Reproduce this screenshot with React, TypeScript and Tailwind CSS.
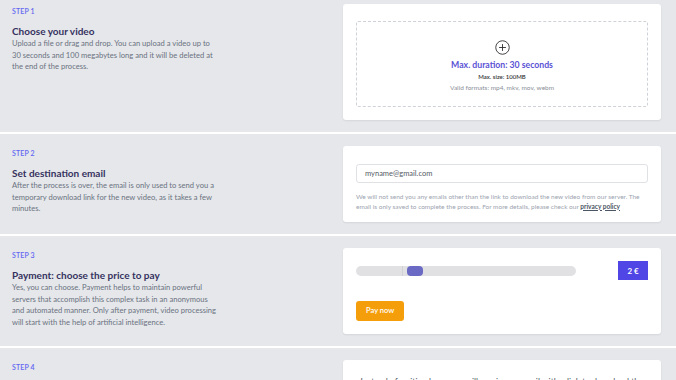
import React from "react";

function StepText({ step, title, desc }: { step: string; title: string; desc: string }) {
  return (
    <div className="flex-1 pt-[2px]">
      <div className="text-[7px] leading-[10px] font-semibold uppercase tracking-[0.02em] text-[#6366f1]">{step}</div>
      <div className="mt-[9px] text-[10px] leading-[13px] font-bold text-[#36325f]">{title}</div>
      <p className="w-[205px] text-[7.6px] leading-[11.5px] text-[#6b7280]">{desc}</p>
    </div>
  );
}

function Card({ children, className }: { children: React.ReactNode; className?: string }) {
  return (
    <div className={"w-[318px] mr-[15px] bg-white rounded-[3px] shadow-[0_1px_2px_rgba(0,0,0,0.08)] " + (className ?? "")}>
      {children}
    </div>
  );
}

export default function App() {
  return (
    <div className="h-[380px] w-[676px] overflow-hidden bg-[#e5e7eb] font-['Lato',_sans-serif]">
      <div className="-mt-[8px]">
        {/* Step 1 */}
        <section className="flex items-start pl-[12px] py-[12px]">
          <StepText
            step="Step 1"
            title="Choose your video"
            desc="Upload a file or drag and drop. You can upload a video up to 30 seconds and 100 megabytes long and it will be deleted at the end of the process."
          />
          <Card className="px-[13px] pt-[17px] pb-[13px]">
            <div className="h-[86px] border border-dashed border-[#cfd2d8] rounded-[2px] flex flex-col items-center pt-[18px]">
              <svg width="15" height="15" viewBox="0 0 24 24" fill="none" stroke="#2a2a2a" strokeWidth="1.4">
                <circle cx="12" cy="12" r="10.8" />
                <path d="M12 6.5v11M6.5 12h11" />
              </svg>
              <div className="mt-[4px] text-[8.7px] leading-[12px] font-bold text-[#5a52d5]">Max. duration: 30 seconds</div>
              <div className="mt-[1px] text-[6px] leading-[9px] font-semibold text-[#333]">Max. size: 100MB</div>
              <div className="mt-[2px] text-[6.5px] leading-[9px] text-[#8a8f98]">Valid formats: mp4, mkv, mov, webm</div>
            </div>
          </Card>
        </section>
        <div className="h-[2px] bg-white" />

        {/* Step 2 */}
        <section className="flex items-start pl-[12px] py-[12px]">
          <StepText
            step="Step 2"
            title="Set destination email"
            desc="After the process is over, the email is only used to send you a temporary download link for the new video, as it takes a few minutes."
          />
          <Card className="px-[13px] pt-[18px] pb-[11px]">
            <div className="h-[19px] border border-[#dfe1e5] rounded-[3px] flex items-center px-[8px] text-[7.5px] text-[#555b66]">
              myname@gmail.com
            </div>
            <p className="mt-[9px] text-[6.5px] leading-[9.5px] text-[#9ca3af]">
              We will not send you any emails other than the link to download the new video from our server. The email is only saved to complete the process. For more details, please check our{" "}
              <span className="font-bold text-[#4b5563] underline">privacy policy</span>
            </p>
          </Card>
        </section>
        <div className="h-[2px] bg-white" />

        {/* Step 3 */}
        <section className="flex items-start pl-[12px] py-[12px]">
          <StepText
            step="Step 3"
            title="Payment: choose the price to pay"
            desc="Yes, you can choose. Payment helps to maintain powerful servers that accomplish this complex task in an anonymous and automated manner. Only after payment, video processing will start with the help of artificial intelligence."
          />
          <Card className="px-[13px] pt-[13px] pb-[13px]">
            <div className="flex items-center">
              <div className="relative w-[220px] h-[10px] rounded-full bg-[#e1e1e3]">
                <div className="absolute left-[46px] top-0 h-[10px] w-[1px] bg-[#d2d2d6]" />
                <div className="absolute left-[51px] top-0 h-[10px] w-[16px] rounded-[4px] bg-[#6a6ac4]" />
              </div>
              <div className="ml-auto h-[19px] w-[30px] bg-[#4f46e5] flex items-center justify-center text-[8px] font-bold text-white">
                2 €
              </div>
            </div>
            <button className="mt-[21px] h-[20px] px-[10px] rounded-[3px] bg-[#f59e0b] text-white text-[7.5px] font-semibold">
              Pay now
            </button>
          </Card>
        </section>
        <div className="h-[2px] bg-white" />

        {/* Step 4 */}
        <section className="flex items-start pl-[12px] py-[12px]">
          <StepText
            step="Step 4"
            title="Download your new video"
            desc="Once the process is complete, you will receive an email with the download link for the new video."
          />
          <Card className="px-[13px] pt-[16px] pb-[13px]">
            <p className="text-center text-[8.5px] leading-[12px] text-[#4b5563]">
              Instead of waiting here, you will receive an email with a link to download the new video when it is ready.
            </p>
          </Card>
        </section>
      </div>
    </div>
  );
}
